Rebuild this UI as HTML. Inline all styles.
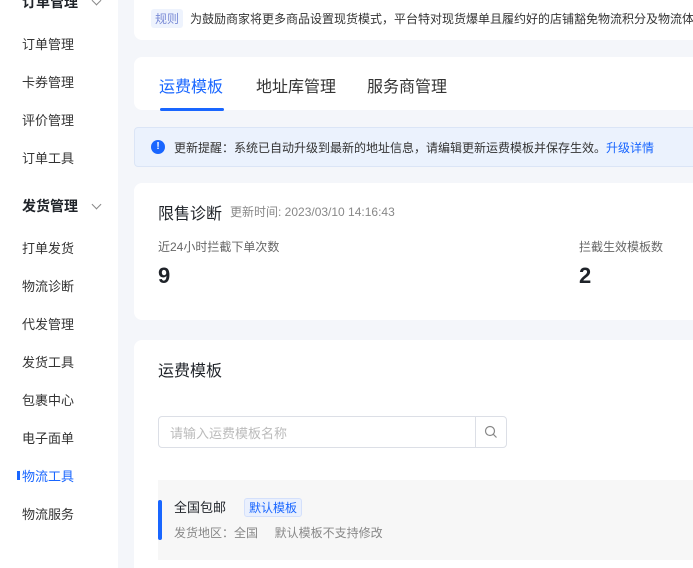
<!DOCTYPE html>
<html><head><meta charset="utf-8"><style>
*{margin:0;padding:0;box-sizing:border-box}
html,body{width:693px;height:568px;overflow:hidden}
body{background:#f4f6fa;font-family:"Liberation Sans","Noto Sans CJK SC",sans-serif;position:relative;color:#1f2329}
.side{position:absolute;left:0;top:0;width:118px;height:568px;background:#fff}
.si{position:absolute;left:22px;font-size:13px;color:#333}
.grp{position:absolute;left:22px;font-size:14px;font-weight:bold;color:#1f2329}
.chev{position:absolute;left:93px;width:7px;height:7px;border-right:1px solid #888;border-bottom:1px solid #888;transform:rotate(45deg)}
.card{position:absolute;left:134px;right:0;background:#fff;border-radius:8px 0 0 8px}
</style></head><body>
<div class="side">
<div class="grp" style="top:-8px">订单管理</div><div class="chev" style="top:-3px"></div>
<div class="si" style="top:34px">订单管理</div>
<div class="si" style="top:72px">卡券管理</div>
<div class="si" style="top:110px">评价管理</div>
<div class="si" style="top:148px">订单工具</div>
<div class="grp" style="top:196px">发货管理</div><div class="chev" style="top:201px"></div>
<div class="si" style="top:238px">打单发货</div>
<div class="si" style="top:276px">物流诊断</div>
<div class="si" style="top:314px">代发管理</div>
<div class="si" style="top:352px">发货工具</div>
<div class="si" style="top:390px">包裹中心</div>
<div class="si" style="top:428px">电子面单</div>
<div style="position:absolute;left:17px;top:471px;width:3px;height:9px;background:#1966ff"></div>
<div class="si" style="top:466px;color:#1966ff">物流工具</div>
<div class="si" style="top:504px">物流服务</div>
</div>

<div class="card" style="top:-10px;height:50px;border-radius:0 0 0 8px">
<span style="position:absolute;left:17px;top:19px;background:#eef3fd;color:#7a8bd6;font-size:12px;padding:1px 4px;border-radius:3px">规则</span>
<span style="position:absolute;left:56px;top:20px;font-size:12px;color:#333;white-space:nowrap">为鼓励商家将更多商品设置现货模式，平台特对现货爆单且履约好的店铺豁免物流积分及物流体</span>
</div>

<div class="card" style="top:57px;height:53px">
<span style="position:absolute;left:25px;top:16px;font-size:16px;color:#1966ff">运费模板</span>
<div style="position:absolute;left:26px;top:51px;width:64px;height:3px;background:#1966ff;border-radius:2px"></div>
<span style="position:absolute;left:122px;top:16px;font-size:16px;color:#333">地址库管理</span>
<span style="position:absolute;left:233px;top:16px;font-size:16px;color:#333">服务商管理</span>
</div>

<div style="position:absolute;left:134px;right:-5px;top:127px;height:40px;background:#ebf2fd;border:1px solid #dbe5f6;border-radius:4px">
<div style="position:absolute;left:16px;top:12px;width:14px;height:14px;border-radius:50%;background:#1966ff;color:#fff;font-size:10px;line-height:14px;text-align:center;font-weight:bold">!</div>
<span style="position:absolute;left:39px;top:11px;font-size:12px;color:#333;white-space:nowrap">更新提醒：系统已自动升级到最新的地址信息，请编辑更新运费模板并保存生效。<span style="color:#1966ff">升级详情</span></span>
</div>

<div class="card" style="top:183px;height:137px">
<span style="position:absolute;left:24px;top:17px;font-size:16px;color:#1f2329">限售诊断</span>
<span style="position:absolute;left:96px;top:20px;font-size:12px;color:#888">更新时间: 2023/03/10 14:16:43</span>
<span style="position:absolute;left:24px;top:55px;font-size:12px;color:#666">近24小时拦截下单次数</span>
<span style="position:absolute;left:24px;top:80px;font-size:22px;color:#1f2329;font-weight:bold">9</span>
<span style="position:absolute;left:445px;top:55px;font-size:12px;color:#666">拦截生效模板数</span>
<span style="position:absolute;left:445px;top:80px;font-size:22px;color:#1f2329;font-weight:bold">2</span>
</div>

<div class="card" style="top:340px;height:228px;border-radius:8px 0 0 0">
<span style="position:absolute;left:24px;top:17px;font-size:16px;color:#1f2329">运费模板</span>
<div style="position:absolute;left:24px;top:76px;width:349px;height:32px;border:1px solid #dcdfe6;border-radius:4px">
<span style="position:absolute;left:11px;top:6px;font-size:13px;color:#bbb">请输入运费模板名称</span>
<div style="position:absolute;left:316px;top:0;width:1px;height:30px;background:#dcdfe6"></div>
<svg style="position:absolute;left:325px;top:8px" width="14" height="14" viewBox="0 0 14 14"><circle cx="6" cy="6" r="4.5" fill="none" stroke="#888" stroke-width="1.2"/><path d="M9.3 9.3L12.5 12.5" stroke="#888" stroke-width="1.2"/></svg>
</div>
<div style="position:absolute;left:24px;top:140px;right:0;height:80px;background:#f7f7f7">
<div style="position:absolute;left:0;top:20px;width:4px;height:40px;background:#1966ff;border-radius:2px"></div>
<span style="position:absolute;left:16px;top:17px;font-size:13px;color:#1f2329">全国包邮</span>
<span style="position:absolute;left:86px;top:18px;font-size:12px;color:#1966ff;background:#eaf0fd;border:1px solid #d4e0fb;padding:0 4px;border-radius:3px">默认模板</span>
<span style="position:absolute;left:16px;top:44px;font-size:12px;color:#888;white-space:nowrap">发货地区：全国&nbsp;&nbsp;&nbsp;&nbsp;&nbsp;默认模板不支持修改</span>
</div>
</div>
</body></html>
